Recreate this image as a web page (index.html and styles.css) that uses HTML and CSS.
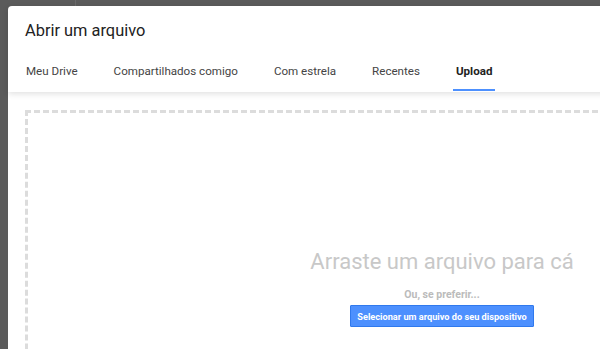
FILE: index.html
```html
<!DOCTYPE html>
<html lang="pt">
<head>
<meta charset="utf-8">
<title>Abrir um arquivo</title>
<link rel="stylesheet" href="styles.css">
</head>
<body>
<div class="dialog">
  <div class="header">
    <div class="title">Abrir um arquivo</div>
    <div class="tabs">
      <div class="tab">Meu Drive</div>
      <div class="tab">Compartilhados comigo</div>
      <div class="tab">Com estrela</div>
      <div class="tab">Recentes</div>
      <div class="tab active">Upload</div>
    </div>
  </div>
  <div class="body">
    <div class="dropzone">
      <div class="drop-text">Arraste um arquivo para cá</div>
      <div class="or-text">Ou, se preferir...</div>
      <button class="select-btn">Selecionar um arquivo do seu dispositivo</button>
    </div>
  </div>
</div>
</body>
</html>
```
FILE: styles.css
```css
html, body {
  margin: 0;
  padding: 0;
  height: 100%;
  overflow: hidden;
}
body {
  background-color: #5b5b5b;
  background-image: linear-gradient(to right, transparent 75px, #6a6a6a 75px, #6a6a6a 76px, transparent 76px);
  font-family: Roboto, "Liberation Sans", Arial, sans-serif;
}
.dialog {
  margin: 6px 0 0 8px;
  width: 868px;
  height: 600px;
  background: #fff;
  border-radius: 4px 4px 0 0;
}
.header {
  position: relative;
  padding: 0 15px;
  box-shadow: 0 2px 6px rgba(0,0,0,0.12);
  z-index: 1;
}
.title {
  padding-top: 15px;
  padding-left: 2px;
  font-size: 16.4px;
  line-height: 20px;
  color: #222;
  height: 31px;
}
.tabs {
  display: flex;
  gap: 30px;
  height: 40px;
}
.tab {
  padding: 0 3px;
  font-size: 11.6px;
  line-height: 38px;
  color: #444;
  border-bottom: 2px solid transparent;
  box-sizing: border-box;
  height: 39px;
}
.tab.active {
  font-weight: bold;
  color: #222;
  border-bottom-color: #4d90fe;
}
.body {
  padding: 18px 17px 0 17px;
}
.dropzone {
  height: 500px;
  border: 3px dashed #dcdcdc;
  border-bottom: none;
  display: flex;
  flex-direction: column;
  align-items: center;
  padding-top: 136px;
  box-sizing: border-box;
}
.drop-text {
  font-size: 22px;
  line-height: 26px;
  color: #c8c8c8;
}
.or-text {
  margin-top: 13px;
  font-size: 10.5px;
  font-weight: bold;
  color: #bbb;
  line-height: 14px;
}
.select-btn {
  margin-top: 3px;
  height: 22px;
  padding: 0 6px;
  background: #4d90fe;
  border: 1px solid #3079ed;
  color: #fff;
  font-family: Roboto, "Liberation Sans", Arial, sans-serif;
  font-size: 9.2px;
  font-weight: bold;
  border-radius: 1px;
}
```
